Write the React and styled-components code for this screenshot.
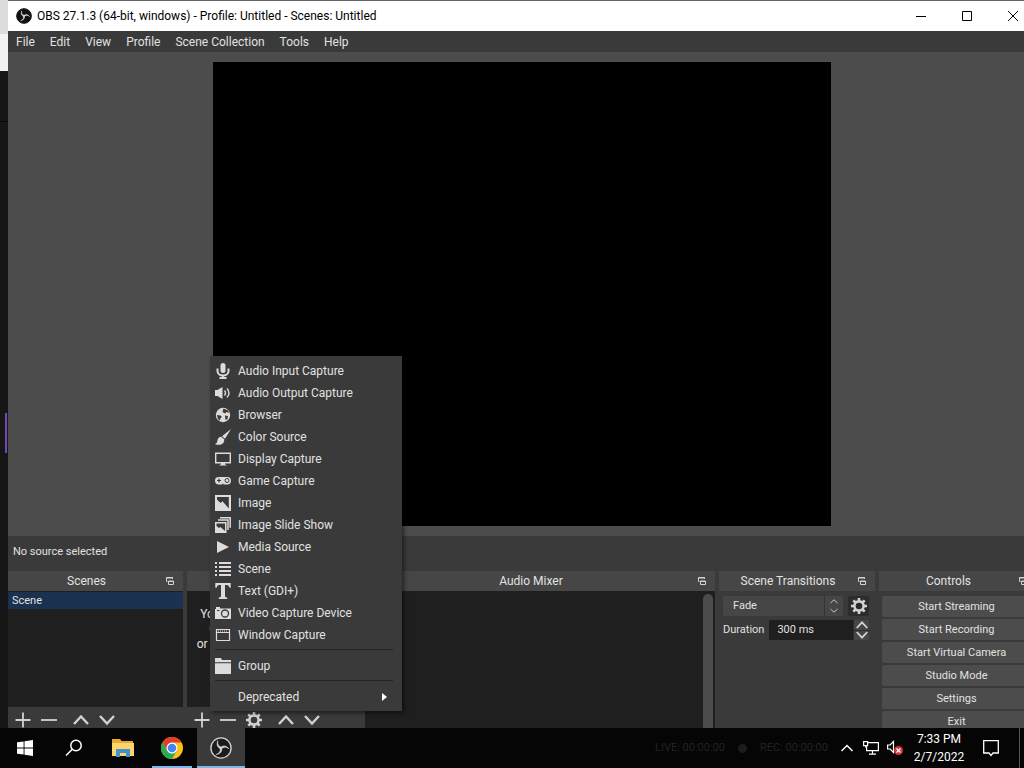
import React, {useState} from 'react'
import styled, {createGlobalStyle, css} from 'styled-components'


const controls = ['Start Streaming', 'Start Recording', 'Start Virtual Camera', 'Studio Mode', 'Settings', 'Exit']

const sourceTypes = [
  {
    label: 'Audio Input Capture',
    icon: <g><rect x="5.500" y="0" width="5" height="10" rx="2.500" /><path d="M2.500 5.500V8a5.500 4.500 0 0 0 11 0V5.500M8 12.500V15M4.500 15h7" fill="none" stroke="currentColor" strokeWidth="2" /></g>
  },
  {
    label: 'Audio Output Capture',
    icon: <g><path d="M0 5h2.500L7.500 2v12L2.500 11H0z" /><path d="M9.500 5.500q2 2.500 0 5M12 3.500q4 4.500 0 9" fill="none" stroke="currentColor" strokeWidth="1.400" /></g>
  },
  {
    label: 'Browser',
    icon: <g><circle cx="8" cy="8" r="7.200" /><path d="M8.500 1.500l4.500 2 1 2.500-2.500-1-1.500 1.500-2.500-1.500zM2 8l3.500.5L7 10l-1.500 1-.5 2.500L3 12zM10 8.500l3 .5-.5 3-2 1z" fill="#3a3a3a" /></g>
  },
  {
    label: 'Color Source',
    icon: <g><path d="M16 0L10 9.700 7 7.200zM6.200 7.800l3 2.500q.300 3.900-3.200 5.200-2.800.8-6-.3 2.200-.8 2.300-3 .500-4.200 3.900-4.400z" /></g>
  },
  {
    label: 'Display Capture',
    icon: <g><path d="M.700 2.200h14.600v9.600H.700z" fill="none" stroke="currentColor" strokeWidth="1.400" /><path d="M6 12h4v1.200l2 1.300H4l2-1.300z" /></g>
  },
  {
    label: 'Game Capture',
    icon: <g><rect x="0" y="4" width="16" height="7.500" rx="3.700" /><path d="M4 5.500v4M2 7.500h4" stroke="#3a3a3a" strokeWidth="1.200" /><circle cx="12" cy="7.500" r="2" fill="none" stroke="#3a3a3a" /><path d="M7 11.800l1-1.500 1 1.500z" fill="#3a3a3a" /></g>
  },
  {
    label: 'Image',
    icon: <path fillRule="evenodd" d="M0 0h16v16H0zM2 2v2.500L5.500 8 7.500 6.300 13.800 13.500V2z" />
  },
  {
    label: 'Image Slide Show',
    icon: <g><path d="M5 .800h10.200v10M3 3h10v10" fill="none" stroke="currentColor" strokeWidth="1.500" /><path fillRule="evenodd" d="M0 5h11.500v11H0zM1.500 6.500V9l2.500 2 1.500-1L10 14V6.500z" /></g>
  },
  {label: 'Media Source', icon: <path d="M2 2l12 6-12 6z" />},
  {
    label: 'Scene',
    icon: <path d="M0 1h2v2H0zM4 1h12v2H4zM0 5h2v2H0zM4 5h12v2H4zM0 9h2v2H0zM4 9h12v2H4zM0 13h2v2H0zM4 13h12v2H4z" />
  },
  {
    label: 'Text (GDI+)',
    icon: <path d="M.300 0h15.400v4.800h-1.200Q14 2.200 12 2H10V13q0 1.500 2.200 1.500V16H3.800v-1.500Q6 14.500 6 13V2H4Q2 2.200 1.500 4.800H.300z" />
  },
  {
    label: 'Video Capture Device',
    icon: <g><path d="M1 2h4v1.500h11V14H0V4h1z" /><circle cx="10" cy="8.500" r="3.500" fill="none" stroke="#3a3a3a" strokeWidth="1.300" /><path d="M2 5.500h2.500" stroke="#3a3a3a" /></g>
  },
  {
    label: 'Window Capture',
    icon: <g><path d="M1.500 2.500h13v11h-13zM1.500 5.500h13" fill="none" stroke="currentColor" strokeWidth="1.200" /><path d="M3 4h9" stroke="currentColor" strokeDasharray="1 1" /></g>
  }
]

const folder = <path d="M0 0h6l1 2h9v2.300H0zM0 5.300h16V16H0z" />

function Glyph({size = 16, children}) {
  return (
    <svg width={size} height={size} viewBox="0 0 16 16" fill="currentColor" aria-hidden="true">{children}</svg>
  )
}

function Plus() {
  return <Glyph><path d="M8 .500v15M.500 8h15" stroke="currentColor" strokeWidth="1.800" /></Glyph>
}

function Minus() {
  return <Glyph><path d="M0 8h16" stroke="currentColor" strokeWidth="1.800" /></Glyph>
}

function Chevron({down, size = 16}) {
  return (
    <Glyph size={size}>
      <path d={down ? 'M1 4l7 7.500L15 4' : 'M1 12l7-7.500L15 12'} fill="none" stroke="currentColor" strokeWidth="2.400" />
    </Glyph>
  )
}

function Gear() {
  return (
    <Glyph>
      <circle cx="8" cy="8" r="4.600" fill="none" stroke="currentColor" strokeWidth="2.600" />
      <path d="M8 0v3M8 13v3M0 8h3M13 8h3M2.300 2.300l2.200 2.200M11.500 11.500l2.200 2.200M13.700 2.300l-2.200 2.200M4.500 11.500l-2.200 2.200" stroke="currentColor" strokeWidth="2.600" />
    </Glyph>
  )
}

function Popout() {
  return (
    <svg width="10" height="10" viewBox="0 0 10 10" fill="none" stroke="currentColor" aria-hidden="true">
      <path d="M2.500 5.500h-1v-4h6v1.500M1 2h7" />
      <path d="M3.500 5h5v3.500h-5zM3 5.500h6" />
    </svg>
  )
}

// three curved blades turned around the hub
function ObsLogo({size, line, fill}) {
  return (
    <svg width={size} height={size} viewBox="0 0 24 24" fill="none" aria-hidden="true">
      <circle cx="12" cy="12" r="11" fill={fill} stroke={line} strokeWidth="1.500" />
      {[0, 120, 240].map((turn) => (
        <path
          key={turn}
          d="M12 12.500C8.500 12 6.500 8.500 8.500 4C7.800 8 9.300 10.300 12.800 11z"
          fill="#d8d8d8"
          stroke="#d8d8d8"
          strokeWidth=".6"
          transform={`rotate(${turn} 12 12)`}
        />
      ))}
    </svg>
  )
}

function Dock({title, grow, children}) {
  return (
    <DockFrame $grow={grow}>
      <DockTitle>
        <h2>{title}</h2>
        <IconButton aria-label="Undock"><Popout /></IconButton>
      </DockTitle>
      {children}
    </DockFrame>
  )
}

function App() {
  const [transition, setTransition] = useState('Fade')
  const [duration, setDuration] = useState('300 ms')

  return (
    <Desktop>
      <GlobalStyle />
      <Workspace>
        <Backdrop><span /></Backdrop>
        <Window>
          <TitleBar>
            <ObsLogo size={16} line="#111" fill="#111" />
            <h1>OBS 27.1.3 (64-bit, windows) - Profile: Untitled - Scenes: Untitled</h1>
            <WindowButtons>
              <button aria-label="Minimize"><svg width="10" height="10"><path d="M0 5.500h10" stroke="#000" /></svg></button>
              <button aria-label="Maximize"><svg width="10" height="10"><path d="M.500.500h9v9h-9z" fill="none" stroke="#000" /></svg></button>
              <button aria-label="Close"><svg width="10" height="10"><path d="M0 0l10 10M10 0L0 10" stroke="#000" /></svg></button>
            </WindowButtons>
          </TitleBar>

          <MenuBar>
            {['File', 'Edit', 'View', 'Profile', 'Scene Collection', 'Tools', 'Help'].map((name) => (
              <button key={name}>{name}</button>
            ))}
          </MenuBar>

          <Preview><Canvas /></Preview>
          <SourceBar>No source selected</SourceBar>

          <Docks>
            <Dock title="Scenes" grow={175}>
              <List><SceneRow>Scene</SceneRow></List>
              <ListTools>
                <IconButton aria-label="Add scene"><Plus /></IconButton>
                <IconButton aria-label="Remove scene"><Minus /></IconButton>
                <Spacer />
                <IconButton aria-label="Move scene up"><Chevron /></IconButton>
                <IconButton aria-label="Move scene down"><Chevron down /></IconButton>
              </ListTools>
            </Dock>

            <Dock grow={174}>
              <List>
                <EmptyText>
                  You don't have any sources.<br />
                  Click the + button below,<br />
                  or right click here to add one.
                </EmptyText>
              </List>
              <ListTools>
                <IconButton aria-label="Add source"><Plus /></IconButton>
                <IconButton aria-label="Remove source"><Minus /></IconButton>
                <IconButton aria-label="Source properties"><Gear /></IconButton>
                <Spacer />
                <IconButton aria-label="Move source up"><Chevron /></IconButton>
                <IconButton aria-label="Move source down"><Chevron down /></IconButton>
              </ListTools>

              {/* menu opened by the add source button */}
              <AddMenu>
                {sourceTypes.map((type) => (
                  <MenuItem key={type.label}><Glyph>{type.icon}</Glyph>{type.label}</MenuItem>
                ))}
                <hr />
                <MenuItem><Glyph>{folder}</Glyph>Group</MenuItem>
                <hr />
                <MenuItem $plain>
                  Deprecated
                  <svg width="5" height="8"><path d="M0 0l5 4-5 4z" fill="#fff" /></svg>
                </MenuItem>
              </AddMenu>
            </Dock>

            <Dock title="Audio Mixer" grow={350}>
              <Mixer><span /></Mixer>
            </Dock>

            <Dock title="Scene Transitions" grow={156}>
              <TransitionForm>
                <FormRow>
                  <SelectBox>
                    <select aria-label="Transition" value={transition} onChange={(e) => setTransition(e.target.value)}>
                      <option>Fade</option>
                      <option>Cut</option>
                    </select>
                    <svg width="8" height="14" viewBox="0 0 8 14" fill="none" stroke="#c8c8c8"><path d="M.500 4L4 .800 7.500 4M.500 10L4 13.200 7.500 10" /></svg>
                  </SelectBox>
                  <GearButton type="button" aria-label="Transition properties"><Gear /></GearButton>
                </FormRow>
                <FormRow>
                  <label htmlFor="duration">Duration</label>
                  <SpinBox>
                    <input id="duration" value={duration} onChange={(e) => setDuration(e.target.value)} />
                    <div>
                      <button type="button" aria-label="Increase"><Chevron size={12} /></button>
                      <button type="button" aria-label="Decrease"><Chevron size={12} down /></button>
                    </div>
                  </SpinBox>
                </FormRow>
              </TransitionForm>
            </Dock>

            <Dock title="Controls" grow={157}>
              <ControlList>
                {controls.map((name) => <button key={name}>{name}</button>)}
              </ControlList>
            </Dock>
          </Docks>
        </Window>
      </Workspace>

      <Taskbar>
        <TaskButton aria-label="Start">
          <svg width="16" height="16" fill="#fff"><path d="M0 2.300L6.600 1.400V7.600H0zM7.500 1.300L16 0v7.600H7.500zM0 8.400h6.600v6.200L0 13.700zM7.500 8.400H16V16l-8.500-1.200z" /></svg>
        </TaskButton>
        <TaskButton aria-label="Search">
          <svg width="18" height="18" fill="none" stroke="#fff" strokeWidth="1.500"><circle cx="11" cy="6.500" r="5.200" /><path d="M7.300 10.200L1 16.500" /></svg>
        </TaskButton>
        <TaskButton aria-label="File Explorer">
          <svg width="22" height="18">
            <path d="M0 0h8l1.500 2H21v15H0z" fill="#e9ab2c" />
            <path d="M0 4h22v13H0z" fill="#fbd56b" />
            <path d="M4 10h14v8h-4v-4H8v4H4z" fill="#3f93cf" />
          </svg>
        </TaskButton>
        <TaskButton aria-label="Google Chrome" $open>
          <svg width="22" height="22" viewBox="0 0 22 22">
            <circle cx="11" cy="11" r="11" fill="#fbc116" />
            <path d="M1.470 5.500A11 11 0 0 1 20.530 5.500H11L6.240 13.750z" fill="#e33b2e" />
            <path d="M1.470 5.500A11 11 0 0 0 11 22l4.760-8.250H6.240z" fill="#2da94f" />
            <circle cx="11" cy="11" r="5.500" fill="#fff" />
            <circle cx="11" cy="11" r="4.300" fill="#4285f4" />
          </svg>
        </TaskButton>
        <TaskButton aria-label="OBS Studio" $open $active><ObsLogo size={22} line="#d0d0d0" fill="#1c1c1c" /></TaskButton>

        <GhostStatus>
          <span>LIVE: 00:00:00</span>
          <i />
          <span>REC: 00:00:00</span>
        </GhostStatus>

        <Tray>
          <button aria-label="Show hidden icons"><svg width="12" height="8" fill="none" stroke="#fff" strokeWidth="1.500"><path d="M.500 7L6 1.500 11.500 7" /></svg></button>
          <button aria-label="Network">
            <svg width="16" height="14" fill="none" stroke="#fff" strokeWidth="1.200"><path d="M5 1.600h10.400v8H3.600V5.500M9.500 10v3M6 13.200h7M.600.600h4v4h-4zM2.600 4.600v2" /></svg>
          </button>
          <button aria-label="Volume">
            <svg width="16" height="16">
              <path d="M.600 5h2.500L6.500 1.500v11L3.100 9H.600z" fill="none" stroke="#fff" strokeWidth="1.200" />
              <circle cx="11.500" cy="10.500" r="4.500" fill="#d13438" />
              <path d="M9.500 8.500l4 4M13.500 8.500l-4 4" stroke="#fff" strokeWidth="1.200" />
            </svg>
          </button>
          <Clock><span>7:33 PM</span><span>2/7/2022</span></Clock>
          <button aria-label="Notifications">
            <svg width="16" height="17" fill="none" stroke="#fff" strokeWidth="1.300"><path d="M.700.700h14.600v12.300H10L8 15.500 6 13H.700z" /></svg>
          </button>
        </Tray>
      </Taskbar>
    </Desktop>
  )
}


const GlobalStyle = createGlobalStyle`
  * {
    box-sizing: border-box;
  }

  body {
    margin: 0;
    background: #000;
    color: #e1e1e1;
    font: 12px/16px Roboto, "Open Sans", sans-serif;
  }

  h1, h2 {
    margin: 0;
    font-size: 12px;
    font-weight: 400;
  }

  button, input, select {
    margin: 0;
    padding: 0;
    border: 0;
    background: none;
    color: inherit;
    font: inherit;
  }

  svg {
    display: block;
    flex: none;
  }
`

const dockFont = css`
  font-size: 11px;
  line-height: 16px;
`

const Desktop = styled.div`
  height: 100vh;
  display: flex;
  flex-direction: column;
  overflow: hidden;
`

const Workspace = styled.div`
  flex: 1;
  min-height: 0;
  display: flex;
  overflow: hidden;
`

const Backdrop = styled.div`
  width: 8px;
  flex: none;
  display: flex;
  flex-direction: column;
  align-items: flex-end;
  padding: 413px 1px 0 0;
  background: linear-gradient(#dcdcdc 34px, #f2f2f2 34px 71px, #161616 71px 121px, #080808 121px 122px, #161616 122px);

  span {
    width: 2px;
    height: 40px;
    background: #7447b8;
  }
`

/* runs a little past the right edge of the screen */
const Window = styled.main`
  flex: 1;
  min-width: 0;
  margin-right: -12px;
  display: flex;
  flex-direction: column;
  background: #3a3a3a;
`

const TitleBar = styled.header`
  height: 31px;
  flex: none;
  display: flex;
  align-items: center;
  gap: 5px;
  padding-left: 8px;
  border-top: 1px solid #666;
  background: #fff;
  color: #000;

  h1 {
    flex: 1;
  }
`

const WindowButtons = styled.div`
  display: flex;

  button {
    width: 46px;
    height: 30px;
    display: flex;
    align-items: center;
    justify-content: center;
  }
`

const MenuBar = styled.nav`
  height: 21px;
  flex: none;
  display: flex;
  align-items: center;
  gap: 15px;
  padding: 0 8px;
`

const Preview = styled.section`
  flex: 1;
  min-height: 0;
  display: flex;
  justify-content: center;
  padding: 10px;
  background: #4c4c4c;
`

const Canvas = styled.div`
  height: 100%;
  aspect-ratio: 4 / 3;
  background: #000;
`

const SourceBar = styled.div`
  height: 35px;
  flex: none;
  padding: 8px 5px;
  ${dockFont}
`

const Docks = styled.div`
  height: 157px;
  flex: none;
  display: flex;
  gap: 4px;
`

const DockFrame = styled.section`
  position: relative;
  flex: ${(props) => props.$grow} 1 0;
  min-width: 0;
  display: flex;
  flex-direction: column;
`

const DockTitle = styled.header`
  height: 20px;
  flex: none;
  display: flex;
  align-items: center;
  padding-right: 8px;
  background: #464646;

  h2 {
    flex: 1;
    text-align: center;
    white-space: nowrap;
  }
`

const IconButton = styled.button`
  display: flex;
  color: #d2d2d2;
`

const List = styled.div`
  flex: 1;
  min-height: 0;
  padding-top: 1px;
  background: #1f1f1f;
`

const SceneRow = styled.div`
  height: 17px;
  padding: 1px 4px;
  background: #1b3150;
  ${dockFont}
`

const EmptyText = styled.p`
  margin: 15px 0 0;
  line-height: 15px;
  text-align: center;
  white-space: nowrap;
`

const ListTools = styled.div`
  height: 21px;
  flex: none;
  display: flex;
  align-items: flex-start;
  gap: 10px;
  padding: 5px 7px 0;
  overflow: hidden;
`

const Spacer = styled.span`
  margin-left: -4px;
`

const AddMenu = styled.div`
  position: absolute;
  z-index: 2;
  left: 23px;
  bottom: 17px;
  width: 192px;
  display: flex;
  flex-direction: column;
  padding: 4px 5px 3px;
  background: #3a3a3a;
  box-shadow: 2px 2px 4px rgba(0, 0, 0, 0.5);

  hr {
    width: 178px;
    height: 1px;
    margin: 3px 0 5px;
    border: 0;
    background: #242424;
  }
`

const MenuItem = styled.button`
  height: 22px;
  display: flex;
  align-items: center;
  gap: 7px;
  white-space: nowrap;
  ${(props) => props.$plain && css`
    justify-content: space-between;
    padding: 0 10px 0 23px;
  `}

  svg {
    color: #dcdcdc;
  }
`

const Mixer = styled.div`
  flex: 1;
  display: flex;
  justify-content: flex-end;
  padding: 3px 2px 0;
  background: #1f1f1f;

  span {
    width: 10px;
    border-radius: 5px 5px 0 0;
    background: #4c4c4c;
  }
`

const TransitionForm = styled.form`
  display: flex;
  flex-direction: column;
  gap: 4px;
  padding: 5px 6px 0 4px;
  ${dockFont}
`

const FormRow = styled.div`
  height: 20px;
  display: flex;
  align-items: center;
  gap: 5px;
`

const SelectBox = styled.div`
  flex: 1;
  height: 20px;
  display: flex;
  align-items: center;
  padding-right: 5px;
  border-radius: 2px;
  background: #464646;

  select {
    flex: 1;
    height: 20px;
    margin-right: 5px;
    padding-left: 10px;
    border-right: 1px solid #353535;
    appearance: none;
    outline: none;
  }
`

const GearButton = styled(IconButton)`
  width: 21px;
  height: 20px;
  align-items: center;
  justify-content: center;
  border-radius: 2px;
  background: #2c2c2c;
`

const SpinBox = styled.div`
  flex: 1;
  min-width: 0;
  height: 20px;
  display: flex;
  gap: 1px;
  background: #2c2c2c;

  input {
    flex: 1;
    min-width: 0;
    padding-left: 8px;
    background: #1f1f1f;
    outline: none;
  }

  div {
    display: flex;
    flex-direction: column;
    gap: 1px;
  }

  button {
    width: 15px;
    flex: 1;
    min-height: 0;
    display: flex;
    align-items: center;
    justify-content: center;
    border-radius: 1px;
    background: #464646;
    color: #d2d2d2;
    overflow: hidden;
  }
`

const ControlList = styled.div`
  flex: 1;
  min-height: 0;
  display: flex;
  flex-direction: column;
  gap: 2px;
  padding: 5px 5px 0 3px;
  overflow: hidden;
  ${dockFont}

  button {
    height: 21px;
    flex: none;
    border-radius: 2px;
    background: #4c4c4c;
  }
`

const Taskbar = styled.footer`
  height: 40px;
  flex: none;
  display: flex;
  gap: 1px;
  padding-left: 1px;
  background: #050505;
  color: #fff;
`

const TaskButton = styled.button`
  width: 48px;
  height: 40px;
  display: flex;
  align-items: center;
  justify-content: center;
  background: ${(props) => (props.$active ? '#3a3a3a' : 'transparent')};
  ${(props) => props.$open && css`
    background-image: linear-gradient(#76b9ed, #76b9ed);
    background-repeat: no-repeat;
    background-position: bottom;
    background-size: ${props.$active ? '48px' : '40px'} 2px;
  `}
`

const GhostStatus = styled.div`
  flex: 1;
  display: flex;
  align-items: center;
  justify-content: flex-end;
  gap: 13px;
  padding-right: 6px;
  color: #232323;
  ${dockFont}

  i {
    width: 9px;
    height: 9px;
    border-radius: 50%;
    background: #1c1c1c;
  }
`

const Tray = styled.div`
  display: flex;
  align-items: center;
  margin-right: 4px;
  border-right: 1px solid #555;

  button {
    width: 24px;
    height: 40px;
    display: flex;
    align-items: center;
    justify-content: center;
  }

  button:last-child {
    width: 56px;
  }
`

const Clock = styled.time`
  width: 48px;
  display: flex;
  flex-direction: column;
  align-items: center;
  gap: 2px;
  margin-left: 8px;
`

export default App
